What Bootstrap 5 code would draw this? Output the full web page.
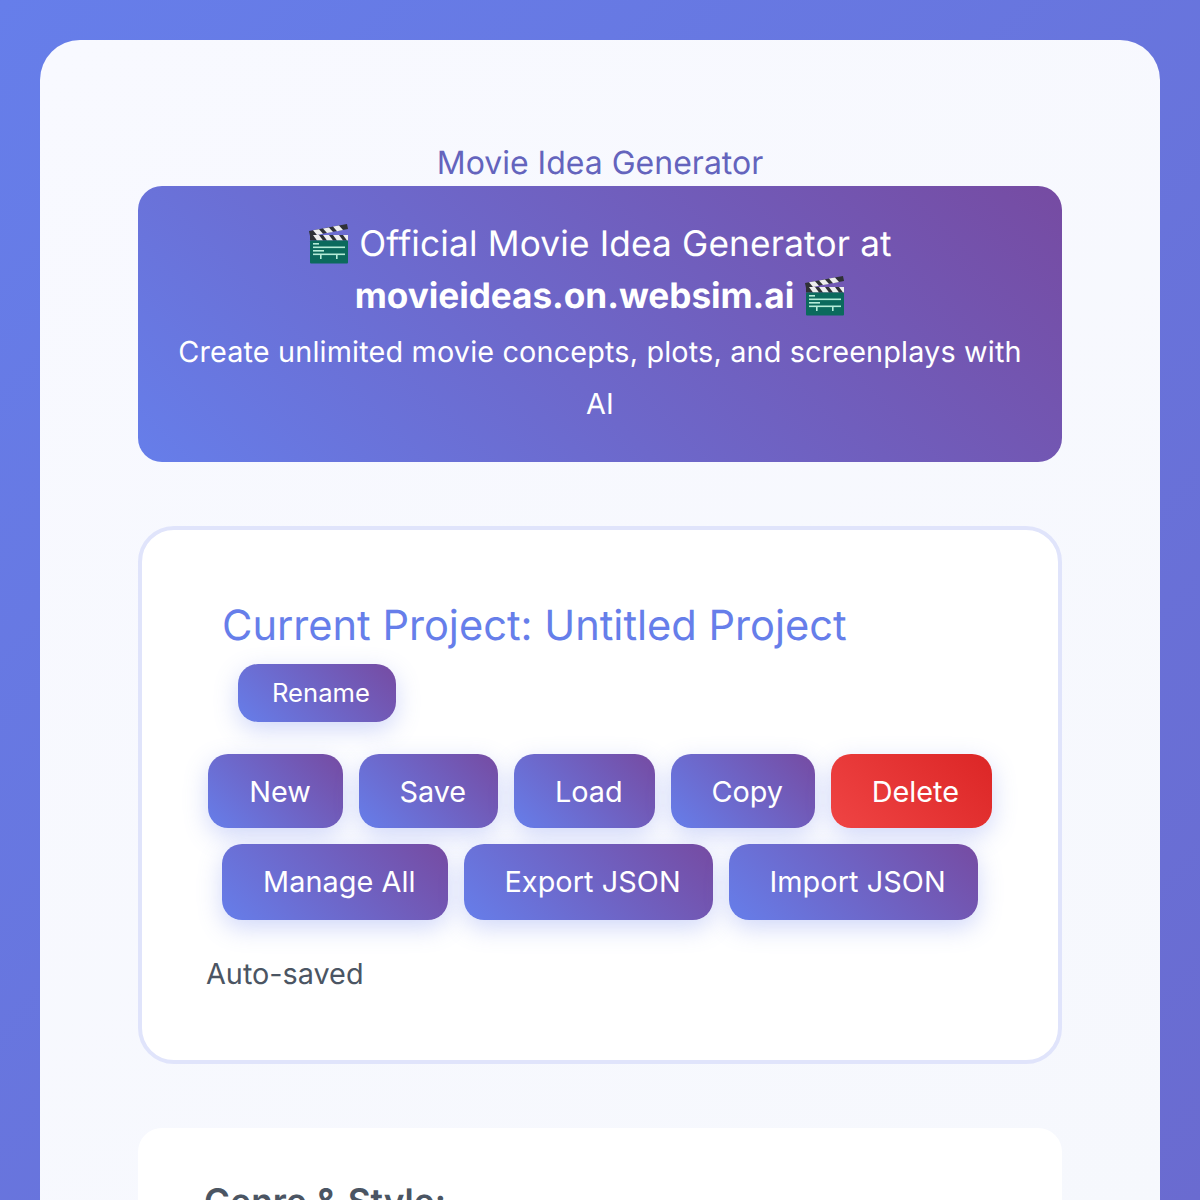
<!DOCTYPE html>
<html lang="en">
<head>
<meta charset="utf-8">
<title>Movie Idea Generator</title>
<link href="https://cdn.jsdelivr.net/npm/bootstrap@5.3.0/dist/css/bootstrap.min.css" rel="stylesheet">
<style>
html, body { height: 1200px; overflow: hidden; }
body { font-family: Inter, "Noto Sans", sans-serif; text-rendering: geometricPrecision; background: linear-gradient(135deg, #667eea 0%, #6a6bd0 100%); padding: 40px; color: #4b5563; }
.shell { background: linear-gradient(145deg, #f8f9ff, #f6f8fd); border-radius: 40px; padding: 99px 98px 0; height: 1200px; }
.page-title { font-size: 32px; font-weight: 400; line-height: 47px; color: #6464bd; text-align: center; margin: 0; }
.grad { background: linear-gradient(45deg, #667eea, #764ba2); color: #fff; }
.banner { border-radius: 24px; padding: 32px; text-align: center; margin-bottom: 64px; }
.banner-head { font-size: 35.2px; line-height: 52px; margin-bottom: 4px; letter-spacing: .17px; }
.banner-head strong { font-weight: 700; letter-spacing: -.04px; }
.clap { width: 41px; height: 41px; vertical-align: -8px; }
.banner-sub { font-size: 28.8px; line-height: 52px; margin: 0; letter-spacing: .16px; }
.project { background: #fff; border: 4px solid #e0e4fb; border-radius: 36px; padding: 65px 64px 65px; margin-bottom: 64px; }
.project-name { font-size: 41.6px; font-weight: 400; color: #667eea; line-height: 62px; margin: 0 0 7px 16px; }
.pill { border: 0; border-radius: 20px; font-family: inherit; box-shadow: 0 8px 24px rgba(102,126,234,.3); }
.pill-sm { font-size: 25.6px; line-height: 34px; padding: 12px 26px 12px 34px; margin: 0 0 32px 32px; display: block; }
.pill-lg { font-size: 28.8px; line-height: 42px; padding: 17px 32px 15px 40.8px; }
.pill-tall { padding-top: 17px; padding-bottom: 17px; letter-spacing: .08px; }
.pill-red { background: linear-gradient(45deg, #ef4444, #dc2626); color: #fff; padding-right: 32.6px; }
.saved { font-size: 28.8px; line-height: 42px; margin: 33px 0 0; }
.genre { background: #fff; border-radius: 24px; padding: 48px 66px; }
.genre-label { font-size: 35.2px; font-weight: 600; line-height: 52px; color: #4b5563; }
</style>
</head>
<body>
<main class="shell">
  <h1 class="page-title">Movie Idea Generator</h1>
  <section class="banner grad">
    <div class="banner-head"><svg class="clap" viewBox="0 0 41 41" role="img" aria-label="clapper board"><polygon fill="#2f3136" points="1,8 39,1 40,6 2,13"/><g fill="#eeeeee"><polygon points="5,7.3 11,6.2 15,10.8 9,11.9"/><polygon points="15,5.5 21,4.4 25,9 19,10.1"/><polygon points="25,3.6 31,2.5 35,7.1 29,8.2"/></g><rect x="2" y="12" width="38" height="5.5" fill="#2f3136"/><g fill="#eeeeee"><polygon points="5,12 11,12 15,17.5 9,17.5"/><polygon points="15,12 21,12 25,17.5 19,17.5"/><polygon points="25,12 31,12 35,17.5 29,17.5"/><polygon points="35,12 40,12 40,17.5 39,17.5"/></g><rect x="2" y="17.5" width="38" height="23" rx="1" fill="#0b6a5d"/><g fill="#b5ecd8"><rect x="5" y="20" width="6" height="1.6"/><rect x="5" y="23.5" width="32" height="1.6"/><rect x="5" y="27" width="11" height="1.6"/><rect x="5" y="30.5" width="32" height="1.6"/><rect x="12" y="31" width="1.6" height="5"/><rect x="28" y="31" width="1.6" height="5"/></g></svg> Official Movie Idea Generator at <strong>movieideas.on.websim.ai</strong> <svg class="clap" viewBox="0 0 41 41" role="img" aria-label="clapper board"><polygon fill="#2f3136" points="1,8 39,1 40,6 2,13"/><g fill="#eeeeee"><polygon points="5,7.3 11,6.2 15,10.8 9,11.9"/><polygon points="15,5.5 21,4.4 25,9 19,10.1"/><polygon points="25,3.6 31,2.5 35,7.1 29,8.2"/></g><rect x="2" y="12" width="38" height="5.5" fill="#2f3136"/><g fill="#eeeeee"><polygon points="5,12 11,12 15,17.5 9,17.5"/><polygon points="15,12 21,12 25,17.5 19,17.5"/><polygon points="25,12 31,12 35,17.5 29,17.5"/><polygon points="35,12 40,12 40,17.5 39,17.5"/></g><rect x="2" y="17.5" width="38" height="23" rx="1" fill="#0b6a5d"/><g fill="#b5ecd8"><rect x="5" y="20" width="6" height="1.6"/><rect x="5" y="23.5" width="32" height="1.6"/><rect x="5" y="27" width="11" height="1.6"/><rect x="5" y="30.5" width="32" height="1.6"/><rect x="12" y="31" width="1.6" height="5"/><rect x="28" y="31" width="1.6" height="5"/></g></svg></div>
    <p class="banner-sub">Create unlimited movie concepts, plots, and screenplays with AI</p>
  </section>
  <section class="project">
    <h2 class="project-name">Current Project: Untitled Project</h2>
    <button class="pill pill-sm grad" type="button">Rename</button>
    <div class="d-flex flex-wrap justify-content-center gap-3">
      <button class="pill pill-lg grad" type="button">New</button>
      <button class="pill pill-lg grad" type="button">Save</button>
      <button class="pill pill-lg grad" type="button">Load</button>
      <button class="pill pill-lg grad" type="button">Copy</button>
      <button class="pill pill-lg pill-red" type="button">Delete</button>
      <button class="pill pill-lg pill-tall grad" type="button">Manage All</button>
      <button class="pill pill-lg pill-tall grad" type="button">Export JSON</button>
      <button class="pill pill-lg pill-tall grad" type="button">Import JSON</button>
    </div>
    <p class="saved">Auto-saved</p>
  </section>
  <section class="genre">
    <label class="genre-label">Genre &amp; Style:</label>
  </section>
</main>
<script src="https://cdn.jsdelivr.net/npm/bootstrap@5.3.0/dist/js/bootstrap.bundle.min.js"></script>
</body>
</html>
